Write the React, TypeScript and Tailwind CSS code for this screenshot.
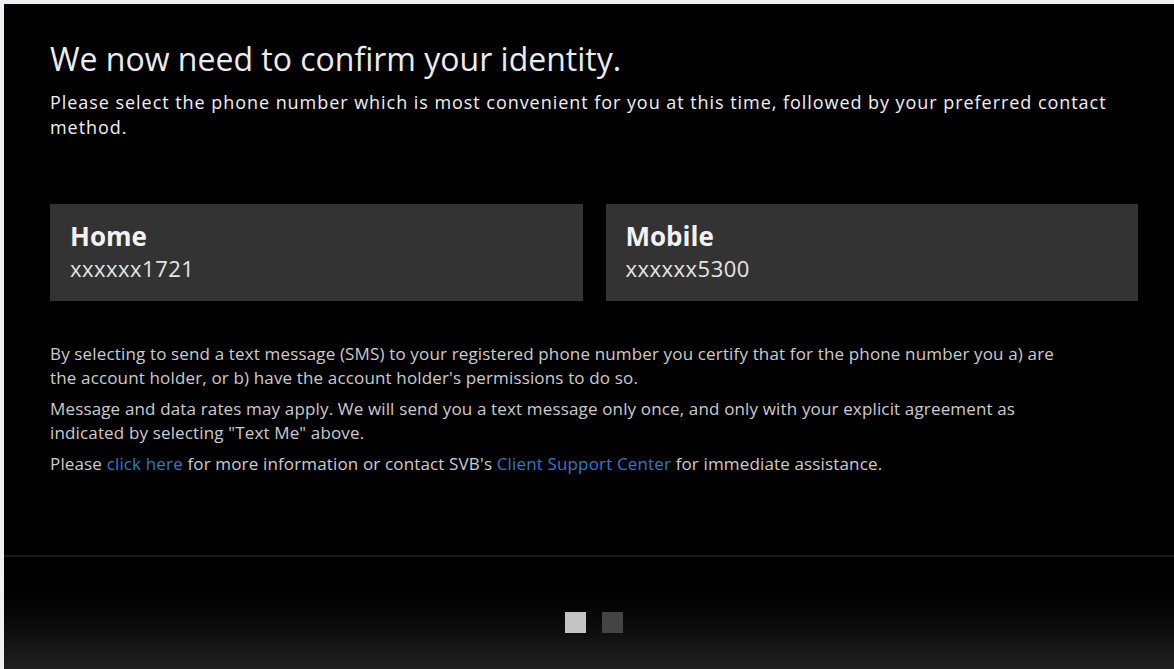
import React from "react";

interface PhoneOption {
  label: string;
  masked: string;
}

const phones: PhoneOption[] = [
  { label: "Home", masked: "xxxxxx1721" },
  { label: "Mobile", masked: "xxxxxx5300" },
];

function PhoneCard({ phone }: { phone: PhoneOption }) {
  return (
    <button
      type="button"
      className="flex h-[97px] flex-col items-start bg-[#333333] px-[20px] pt-[17px] text-left shadow-[0_0_3px_rgba(0,0,0,0.6)]"
    >
      <span className="text-[26px] font-bold leading-[30px] text-[#f2f2f2]">
        {phone.label}
      </span>
      <span className="mt-[2px] text-[22px] leading-[30px] tracking-[0.5px] text-[#e6e6e6]">
        {phone.masked}
      </span>
    </button>
  );
}

export default function App() {
  return (
    <div
      className="h-[669px] overflow-hidden bg-[#eef0f3] pl-[4px] pt-[4px]"
      style={{ fontFamily: '"Open Sans", "Liberation Sans", sans-serif' }}
    >
      <div className="flex h-full flex-col bg-black">
        <main className="flex-1 pl-[46px] pr-[36px] pt-[35px]">
          <h1 className="text-[32px] leading-[40px] text-[#ececec]">
            We now need to confirm your identity.
          </h1>
          <p className="mt-[11px] text-[18px] leading-[25px] tracking-[0.95px] text-[#f0f0f0]">
            Please select the phone number which is most convenient for you at
            this time, followed by your preferred contact method.
          </p>

          <div className="mt-[64px] grid grid-cols-2 gap-[23px]">
            {phones.map((p) => (
              <PhoneCard key={p.label} phone={p} />
            ))}
          </div>

          <div className="mt-[41px] w-[1020px] space-y-[7px] text-[17px] leading-[24px] tracking-[0.15px] text-[#cccccc]">
            <p>
              By selecting to send a text message (SMS) to your registered phone
              number you certify that for the phone number you a) are the
              account holder, or b) have the account holder's permissions to do
              so.
            </p>
            <p>
              Message and data rates may apply. We will send you a text message
              only once, and only with your explicit agreement as indicated by
              selecting "Text Me" above.
            </p>
            <p>
              Please{" "}
              <a href="#" className="text-[#3079c6]">
                click here
              </a>{" "}
              for more information or contact SVB's{" "}
              <a href="#" className="text-[#3079c6]">
                Client Support Center
              </a>{" "}
              for immediate assistance.
            </p>
          </div>
        </main>

        {/* pager strip */}
        <footer className="flex h-[114px] items-start justify-center gap-[16px] border-t-2 border-[#1a1a1a] bg-gradient-to-b from-black to-[#212121] pl-[10px] pt-[55px]">
          <span className="h-[21px] w-[21px] bg-[#c4c4c4]" />
          <span className="h-[21px] w-[21px] bg-[#444444]" />
        </footer>
      </div>
    </div>
  );
}
